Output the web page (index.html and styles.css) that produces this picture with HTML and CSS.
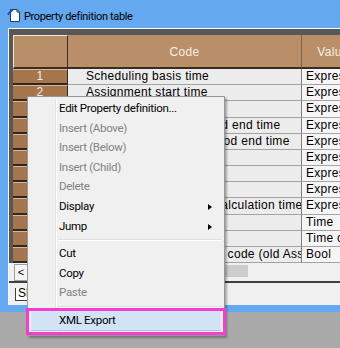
FILE: index.html
```html
<!DOCTYPE html>
<html lang="en">

<head>
  <meta charset="UTF-8" />
  <title>Property definition table</title>
  <link rel="stylesheet" href="styles.css">
</head>

<body>
  <div class="window">

    <div class="titlebar">
      <svg class="app-icon" width="14" height="14" viewBox="0 0 14 14">
        <path d="M3.5 1.5 H10 L12.5 4 V13.5 H3.5 Z" fill="#fff" stroke="#2b3a55" stroke-width="1" />
        <path d="M10 1.5 V4 H12.5" fill="none" stroke="#2b3a55" stroke-width="1" />
        <path d="M0.8 6.5 L5.5 1.8" stroke="#1d4fc9" stroke-width="2" />
      </svg>
      <span class="title">Property definition table</span>
    </div>

    <div class="frame">
      <div class="client">

        <div class="grid">
          <div class="grid-head">
            <div class="hcell num"></div>
            <div class="hcell code">Code</div>
            <div class="hcell value">Value</div>
          </div>

          <div class="grid-body" id="rows"></div>
        </div>

        <div class="hscroll">
          <div class="scroll-btn">&lt;</div>
          <div class="scroll-track">
            <div class="scroll-thumb"></div>
          </div>
        </div>

        <div class="tabs">
          <div class="tab">Sheet1</div>
        </div>

      </div>
    </div>
  </div>

  <!-- context menu on the grid -->
  <div class="menu">
    <div class="gutter"></div>
    <div class="item">Edit Property definition...</div>
    <div class="item off">Insert (Above)</div>
    <div class="item off">Insert (Below)</div>
    <div class="item off">Insert (Child)</div>
    <div class="item off">Delete</div>
    <div class="item sub">Display</div>
    <div class="item sub">Jump</div>
    <div class="sep"></div>
    <div class="item">Cut</div>
    <div class="item">Copy</div>
    <div class="item off">Paste</div>
    <div class="sep"></div>
    <div class="item hot">XML Export</div>
  </div>
  <div class="mark"></div>

  <script>
    const props = [
      ["Scheduling basis time", "Expression"],
      ["Assignment start time", "Expression"],
      ["Assignment end time", "Expression"],
      ["Assignment re-scheduled end time", "Expression"],
      ["Assignment working period end time", "Expression"],
      ["Required time", "Expression"],
      ["Setup time", "Expression"],
      ["Teardown time", "Expression"],
      ["Assignments real start calculation time", "Expression"],
      ["Lead time", "Time"],
      ["Wait time", "Time constraint"],
      ["Use process assignment code (old Assignment)", "Bool"]
    ];

    const body = document.getElementById("rows");
    props.forEach((p, i) => {
      const row = document.createElement("div");
      row.className = "row";
      row.innerHTML = `
      <div class="cell num">${i + 1}</div>
      <div class="cell code">${p[0]}</div>
      <div class="cell value">${p[1]}</div>
    `;
      body.appendChild(row);
    });
  </script>
</body>

</html>
```

FILE: styles.css
```css
body {
  margin: 0;
  width: 340px;
  height: 348px;
  overflow: hidden;
  position: relative;
  background-color: #a9a9a9;
  font-family: 'Liberation Sans', sans-serif;
}

.window {
  width: 400px;
  background-color: #64a9f0;
  padding-bottom: 7px;
}

.titlebar {
  height: 28px;
  display: flex;
  align-items: center;
  padding-left: 7px;
}

.app-icon {
  margin-top: 2px;
}

.title {
  margin-left: 3px;
  margin-top: 4px;
  font-family: Roboto, sans-serif;
  font-size: 11px;
  letter-spacing: -0.35px;
  color: #000;
}

.frame {
  padding-left: 8px;
}

.client {
  background-color: #f0f0f0;
  border-top: 1px solid #fff;
  border-left: 1px solid #f8f8f8;
  height: 276px;
}

/* grid */

.grid {
  border-top: 6px solid #575757;
  border-left: 4px solid #575757;
  font-size: 12px;
  letter-spacing: 0.3px;
}

.grid-head,
.row {
  display: grid;
  grid-template-columns: 55px 234px 62px;
}

.hcell {
  height: 32px;
  background-color: #b88f69;
  color: #f6efe6;
  display: flex;
  align-items: center;
  justify-content: center;
  border-bottom: 2px solid #3d2c1d;
}

.hcell.num {
  border-top: 1px solid #f4e6d6;
  border-left: 1px solid #f4e6d6;
  border-right: 1px solid #3d2c1d;
  height: 31px;
}

.hcell.code {
  border-right: 1px solid #7d6045;
  padding-top: 2px;
  height: 30px;
}

.hcell.value {
  padding-top: 2px;
  height: 30px;
}

.row {
  height: 16.18px;
}

.cell {
  overflow: hidden;
  white-space: nowrap;
  line-height: 15px;
  box-sizing: border-box;
}

.cell.num {
  background-color: #a5764e;
  color: #f4ebe0;
  text-align: center;
  border-top: 1px solid #d9b996;
  border-bottom: 2px solid #33261a;
  border-right: 1px solid #33261a;
  line-height: 13px;
}

.cell.code {
  background-color: #ececec;
  border-bottom: 1px solid #a3a3a3;
  border-right: 1px solid #7f7f7f;
  padding-left: 18px;
}

.cell.value {
  background-color: #f6f6f6;
  border-bottom: 1px solid #a3a3a3;
  padding-left: 4px;
}

/* scroll bar and tabs */

.hscroll {
  display: flex;
  height: 18px;
  border-bottom: 2px solid #3f3f3f;
}

.scroll-btn {
  width: 12px;
  margin-left: 5px;
  margin-top: 1px;
  height: 15px;
  border: 1px solid #a0a0a0;
  background-color: #f4f4f4;
  font-size: 11px;
  line-height: 15px;
  text-align: center;
}

.scroll-track {
  flex: 1;
  padding: 2px 0;
}

.scroll-thumb {
  width: 50px;
  height: 12px;
  margin-left: 170px;
  background-color: #cdcdcd;
}

.tabs {
  padding-left: 6px;
}

.tab {
  display: inline-block;
  height: 12px;
  padding: 0 4px 0 2px;
  border: 1px solid #3f3f3f;
  border-top: none;
  font-size: 12px;
  line-height: 11px;
  background-color: #fff;
}

/* context menu */

.menu {
  position: absolute;
  left: 27px;
  top: 96px;
  width: 196px;
  padding: 2px 0 4px;
  background-color: #f0f0f0;
  border: 1px solid #979797;
  box-shadow: 2px 2px 2px rgba(0, 0, 0, 0.3);
  font-family: Roboto, sans-serif;
  font-size: 11.5px;
  letter-spacing: -0.3px;
}

.gutter {
  position: absolute;
  left: 27px;
  top: 2px;
  bottom: 2px;
  width: 1px;
  background-color: #e2e3e3;
  border-right: 1px solid #fff;
}

.item {
  position: relative;
  height: 19.6px;
  line-height: 19px;
  padding-left: 31px;
  color: #000;
}

.item.off {
  color: #838383;
}

.item.sub::after {
  content: "";
  position: absolute;
  right: 12px;
  top: 7px;
  border-left: 4px solid #000;
  border-top: 3.5px solid transparent;
  border-bottom: 3.5px solid transparent;
}

.sep {
  height: 1px;
  margin: 3px 2px 3px 30px;
  background-color: #e0e0e0;
  border-bottom: 1px solid #fff;
}

.item.hot {
  background-color: #d2e3f6;
  border-bottom: 1px solid #a8c7ea;
  margin: 0 3px;
  padding-left: 28px;
  height: 18.6px;
}

.mark {
  position: absolute;
  left: 26px;
  top: 308px;
  width: 194px;
  height: 21px;
  border: 3px solid #f73cd0;
}
```
